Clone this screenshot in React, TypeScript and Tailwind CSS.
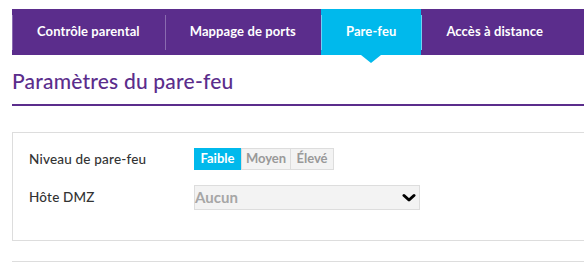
import React from "react";

const tabs = ["Contrôle parental", "Mappage de ports", "Pare-feu", "Accès à distance"];

export default function App() {
  return (
    <div className="w-[584px] h-[262px] overflow-hidden bg-white pl-[12px] pt-[9px]" style={{ fontFamily: "Lato, 'Noto Sans', sans-serif" }}>
      <div className="flex h-[46px] bg-[#5b2d8c] w-[600px]">
        {tabs.map((t, i) => {
          const active = i === 2;
          return (
            <div key={t} className={`relative flex items-center h-full ${active ? "bg-[#00b9ec]" : ""}`}>
              <div className={`absolute left-0 top-[6px] bottom-[5px] w-px ${active || i === 3 ? "bg-[#6fd3f3]" : "bg-[#8a6bb0]"}`} />
              <span className="px-[25px] text-[13px] font-bold text-white whitespace-nowrap tracking-[0.1px]">{t}</span>
              {active && (
                <div className="absolute left-1/2 -translate-x-1/2 top-full w-0 h-0 border-l-[10px] border-r-[10px] border-t-[8px] border-l-transparent border-r-transparent border-t-[#00b9ec]" />
              )}
            </div>
          );
        })}
      </div>
      <div className="mt-[13px] pb-[10px] border-b-2 border-[#5b2d8c] w-[600px]">
        <h1 className="text-[21px] leading-[26px] font-medium text-[#5b2d8c] tracking-[0.2px]">Paramètres du pare-feu</h1>
      </div>
      <div className="mt-[26px] h-[109px] w-[600px] border border-[#dddddd] pl-[16px] pt-[15px]">
        <div className="flex items-center h-[22px]">
          <div className="w-[165px] text-[13.5px] font-medium text-[#333333] tracking-[0.2px]">Niveau de pare-feu</div>
          <div className="flex h-[22px]">
            <div className="flex items-center justify-center w-[47px] h-full bg-[#00b9ec] text-white text-[13px] font-bold">Faible</div>
            <div className="flex items-center justify-center w-[50px] h-full bg-[#f3f3f3] border border-[#dddddd] text-[#999999] text-[13px] font-bold">Moyen</div>
            <div className="flex items-center justify-center w-[43px] h-full bg-[#f3f3f3] border border-l-0 border-[#dddddd] text-[#999999] text-[13px] font-bold">Élevé</div>
          </div>
        </div>
        <div className="flex items-start mt-[15px]">
          <div className="w-[165px] text-[13.5px] font-medium text-[#333333] pt-[2px] tracking-[0.2px]">Hôte DMZ</div>
          <div className="relative flex items-center w-[226px] h-[25px] bg-[#f3f3f3] border border-[#dddddd]">
            <span className="text-[15px] font-bold text-[#a6a6a6]">Aucun</span>
            <svg className="absolute right-[3px] top-[7px]" width="14" height="10" viewBox="0 0 14 10">
              <path d="M2 2.5 L7 7 L12 2.5" fill="none" stroke="#000" strokeWidth="3" strokeLinecap="round" strokeLinejoin="round" />
            </svg>
          </div>
        </div>
      </div>
      <div className="mt-[20px] h-[40px] w-[600px] border-t border-[#dddddd]" />
    </div>
  );
}
